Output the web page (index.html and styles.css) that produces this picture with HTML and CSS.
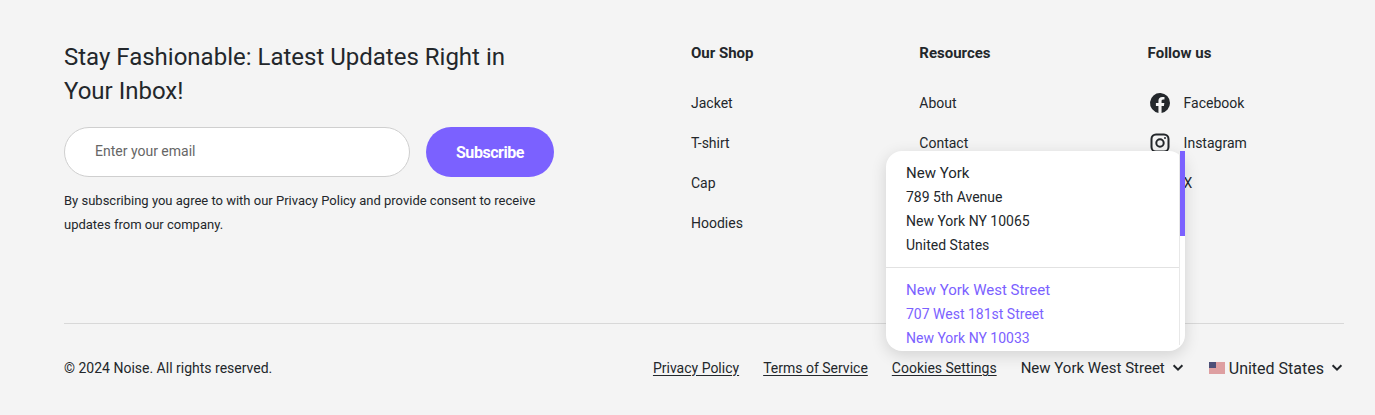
FILE: index.html
```html
<!DOCTYPE html>
<html lang="en">
<head>
<meta charset="utf-8">
<title>Noise footer</title>
<link rel="stylesheet" href="styles.css">
</head>
<body>
<footer class="footer">
  <div class="top">
    <section class="news">
      <h2 class="news-title">Stay Fashionable: Latest Updates Right in Your Inbox!</h2>
      <form class="news-form">
        <input class="email" type="text" placeholder="Enter your email">
        <button class="subscribe" type="button">Subscribe</button>
      </form>
      <p class="legal">By subscribing you agree to with our Privacy Policy and provide consent to receive updates from our company.</p>
    </section>
    <nav class="cols">
      <div class="col">
        <h3 class="col-title">Our Shop</h3>
        <a class="link">Jacket</a>
        <a class="link">T-shirt</a>
        <a class="link">Cap</a>
        <a class="link">Hoodies</a>
      </div>
      <div class="col">
        <h3 class="col-title">Resources</h3>
        <a class="link">About</a>
        <a class="link">Contact</a>
      </div>
      <div class="col">
        <h3 class="col-title">Follow us</h3>
        <a class="link social">
          <svg class="icon" viewBox="0 0 24 24"><path fill="#23272b" d="M22 12a10 10 0 1 0-11.56 9.88v-6.99H7.9V12h2.54V9.8c0-2.5 1.49-3.89 3.78-3.89 1.09 0 2.24.2 2.24.2v2.46h-1.26c-1.24 0-1.63.77-1.63 1.56V12h2.77l-.44 2.89h-2.33v6.99A10 10 0 0 0 22 12z"/></svg>
          Facebook
        </a>
        <a class="link social">
          <svg class="icon" viewBox="0 0 24 24" fill="none" stroke="#23272b" stroke-width="2"><rect x="3.5" y="3.5" width="17" height="17" rx="4.5"/><circle cx="12" cy="12" r="3.7"/><circle cx="17" cy="7" r="1" fill="#23272b" stroke="none"/></svg>
          Instagram
        </a>
        <a class="link social"><span class="icon"></span>X</a>
      </div>
    </nav>
  </div>
  <div class="bottom">
    <span class="copy">© 2024 Noise. All rights reserved.</span>
    <div class="bottom-links">
      <a class="legal-link">Privacy Policy</a>
      <a class="legal-link">Terms of Service</a>
      <a class="legal-link">Cookies Settings</a>
      <span class="select">New York West Street
        <svg class="chev" viewBox="0 0 14 8"><path d="M2.6 1.2 7 5.6l4.4-4.4" fill="none" stroke="#23272b" stroke-width="2"/></svg>
      </span>
      <span class="select country">
        <svg class="flag" viewBox="0 0 16 12"><rect width="16" height="12" fill="#f3d6d6"/><path d="M0 1h16M0 3h16M0 5h16M0 7h16M0 9h16M0 11h16" stroke="#c9686c" stroke-width="1"/><rect width="7" height="6" fill="#4d4f78"/></svg>
        <span class="country-name">United States</span>
        <svg class="chev" viewBox="0 0 14 8"><path d="M2.6 1.2 7 5.6l4.4-4.4" fill="none" stroke="#23272b" stroke-width="2"/></svg>
      </span>
    </div>
  </div>
  <div class="popup">
    <div class="popup-list">
      <div class="place">
        <div class="place-name">New York</div>
        <div>789 5th Avenue</div>
        <div>New York NY 10065</div>
        <div>United States</div>
      </div>
      <div class="place place-active">
        <div class="place-name">New York West Street</div>
        <div>707 West 181st Street</div>
        <div>New York NY 10033</div>
      </div>
    </div>
    <div class="track"></div>
    <div class="thumb"></div>
  </div>
</footer>
</body>
</html>
```
FILE: styles.css
```css
* { box-sizing: border-box; }
html, body { margin: 0; height: 100%; overflow: hidden; }
body {
  background: #f4f4f4;
  color: #23272b;
  font-family: Roboto, "Liberation Sans", sans-serif;
  font-size: 14px;
}
.footer {
  position: relative;
  height: 415px;
  padding: 40px 31px 0 64px;
}
.top {
  display: flex;
  justify-content: space-between;
  height: 283px;
}
.news { width: 490px; }
.news-title {
  margin: 0 0 19px;
  font-size: 24px;
  line-height: 34px;
  font-weight: 400;
}
.news-form { display: flex; gap: 16px; }
.email {
  width: 346px;
  height: 50px;
  padding: 0 30px 2px;
  background: #fff;
  border: 1px solid #cfcfcf;
  border-radius: 25px;
  font: 14px Roboto, sans-serif;
  outline: none;
}
.email::placeholder { color: #666; opacity: 1; }
.subscribe {
  width: 128px;
  height: 50px;
  border: 0;
  border-radius: 25px;
  background: #7b61ff;
  color: #fff;
  font: 700 16px Roboto, sans-serif;
  letter-spacing: -0.45px;
}
.legal {
  margin: 12px 0 0;
  font-size: 13px;
  line-height: 24px;
}
.cols { display: flex; width: 653px; }
.col { width: 228.3px; display: flex; flex-direction: column; }
.col:last-child { width: 196.4px; }
.col-title {
  margin: 0 0 17px;
  height: 26px;
  font-size: 15px;
  line-height: 26px;
  font-weight: 700;
}
.link { display: flex; align-items: center; height: 40px; color: #23272b; }
.social { gap: 12px; }
.icon { width: 24px; height: 24px; flex: none; display: block; }
.bottom {
  display: flex;
  justify-content: space-between;
  align-items: center;
  height: 89px;
  border-top: 1px solid #d8d8d8;
}
.bottom-links { display: flex; align-items: center; gap: 24px; }
.legal-link { text-decoration: underline; text-underline-offset: 2px; }
.select { display: flex; align-items: center; gap: 6px; font-size: 15px; }
.country { gap: 0; }
.country-name { margin: 0 6px 0 4px; font-size: 16px; }
.chev { width: 14px; height: 8px; flex: none; }
.flag { width: 16px; height: 12px; flex: none; }
.popup {
  position: absolute;
  left: 886px;
  top: 151px;
  width: 299px;
  height: 200px;
  display: flex;
  background: #fff;
  border-radius: 16px;
  box-shadow: 0 4px 16px rgba(0, 0, 0, 0.14);
}
.popup-list { flex: 1; min-width: 0; height: 200px; overflow: hidden; border-radius: 16px 0 0 16px; }
.place {
  padding: 10px 20px;
  line-height: 24px;
}
.place + .place { border-top: 1px solid #e2e2e2; }
.place-name { font-size: 15px; }
.place-active { color: #7b61ff; }
.track { width: 6px; margin: 4px 0 6px; border-left: 1px solid #e8e8e8; }
.thumb {
  position: absolute;
  top: 0;
  right: 0;
  width: 5px;
  height: 85px;
  background: #7b61ff;
}
```
